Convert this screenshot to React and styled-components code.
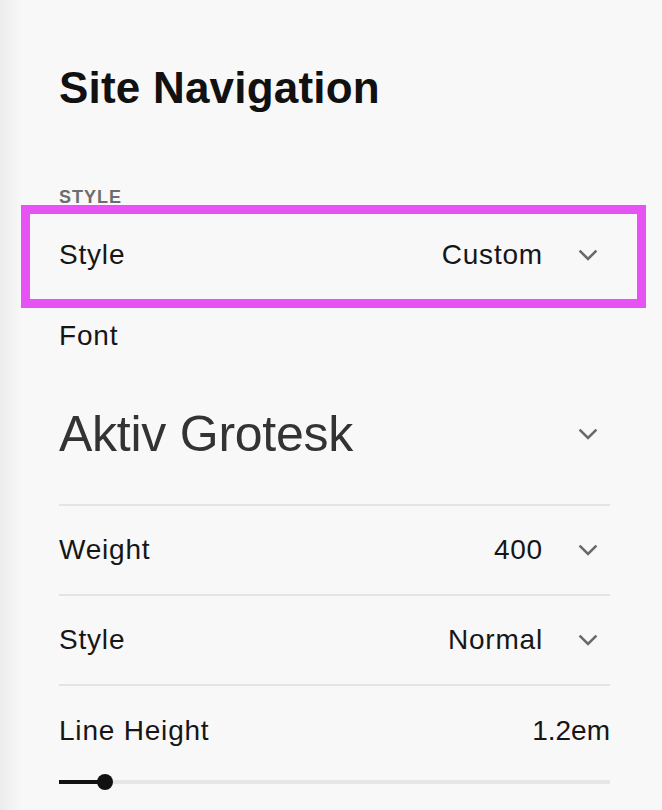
import styled, { createGlobalStyle } from 'styled-components';

const GlobalStyle = createGlobalStyle`
    html, body {
        margin: 0;
        padding: 0;
        background: #f8f8f8;
    }
    body {
        font-family: "Liberation Sans", Arial, sans-serif;
        -webkit-font-smoothing: antialiased;
    }
`

const Chevron = () => (
    <ChevronSvg viewBox="0 0 20 12" aria-hidden="true">
        <polyline points="1.6,1.6 10,10 18.4,1.6" />
    </ChevronSvg>
)

function SelectRow ({ label, value, highlighted }) {
    return (
        <Row $highlighted={highlighted}>
            <RowLabel>{label}</RowLabel>
            <RowValue>{value}</RowValue>
            <Chevron />
        </Row>
    )
}

export default function App () {
    const lineHeightPct = 8.3;

    return (
        <>
            <GlobalStyle />
            <Panel>
                <Title>Site Navigation</Title>
                <SectionLabel>STYLE</SectionLabel>
                <SelectRow label="Style" value="Custom" highlighted />
                <FontBlock>
                    <RowLabel>Font</RowLabel>
                    <FontPicker>
                        <FontName>Aktiv Grotesk</FontName>
                        <Chevron />
                    </FontPicker>
                </FontBlock>
                <SelectRow label="Weight" value="400" />
                <SelectRow label="Style" value="Normal" />
                <SliderBlock>
                    <SliderHead>
                        <RowLabel>Line Height</RowLabel>
                        <SliderValue>1.2em</SliderValue>
                    </SliderHead>
                    <Slider>
                        <SliderFill style={{ width: `${lineHeightPct}%` }} />
                        <SliderThumb />
                        <SliderRest />
                    </Slider>
                </SliderBlock>
            </Panel>
        </>
    )
}

const Panel = styled.div`
    min-height: 810px;
    box-sizing: border-box;
    padding: 66px 52px 0 59px;
    background: linear-gradient(to right, #ececec 0px, #f8f8f8 22px);
    overflow: hidden;
`
const Title = styled.h1`
    margin: 0;
    font-size: 44px;
    line-height: 1;
    font-weight: 700;
    letter-spacing: 0.2px;
    color: #111;
`
const SectionLabel = styled.div`
    margin-top: 78px;
    font-size: 18px;
    line-height: 1;
    font-weight: 700;
    letter-spacing: 1px;
    color: #6d6d6d;
`
const Row = styled.div`
    position: relative;
    display: flex;
    align-items: center;
    height: 88px;
    margin-top: ${p => p.$highlighted ? '5px' : '0'};
    border-bottom: 2px solid #e4e4e4;
    ${p => p.$highlighted && `
        &::after {
            content: '';
            position: absolute;
            top: -6px;
            bottom: -9px;
            left: -38px;
            right: -36px;
            border: 9px solid #e752f4;
            pointer-events: none;
        }
    `}
`
const RowLabel = styled.div`
    flex: 1;
    font-size: 28px;
    line-height: 1;
    letter-spacing: 0.8px;
    color: #161616;
`
const RowValue = styled.div`
    font-size: 28px;
    line-height: 1;
    letter-spacing: 0.8px;
    color: #161616;
`
const ChevronSvg = styled.svg`
    width: 20px;
    height: 12px;
    margin: 0 12px 0 35px;
    flex: none;
    fill: none;
    stroke: #6a6a6a;
    stroke-width: 2.6;
`
const FontBlock = styled.div`
    padding-top: 21px;
`
const FontPicker = styled.div`
    display: flex;
    align-items: center;
    margin-top: 59px;
    padding-bottom: 45px;
    border-bottom: 2px solid #e4e4e4;
`
const FontName = styled.div`
    flex: 1;
    font-size: 50px;
    line-height: 1;
    letter-spacing: -0.25px;
    color: #333;
`
const SliderBlock = styled.div`
    padding-top: 31px;
`
const SliderHead = styled.div`
    display: flex;
    align-items: center;
`
const SliderValue = styled.div`
    font-size: 28px;
    line-height: 1;
    color: #161616;
`
const Slider = styled.div`
    display: flex;
    align-items: center;
    height: 16px;
    margin-top: 29px;
`
const SliderFill = styled.div`
    height: 4px;
    background: #111;
    flex: none;
`
const SliderThumb = styled.div`
    position: relative;
    z-index: 1;
    width: 16px;
    height: 16px;
    margin: 0 -8px;
    border-radius: 50%;
    background: #111;
    flex: none;
`
const SliderRest = styled.div`
    flex: 1;
    height: 4px;
    background: #e6e6e6;
`
